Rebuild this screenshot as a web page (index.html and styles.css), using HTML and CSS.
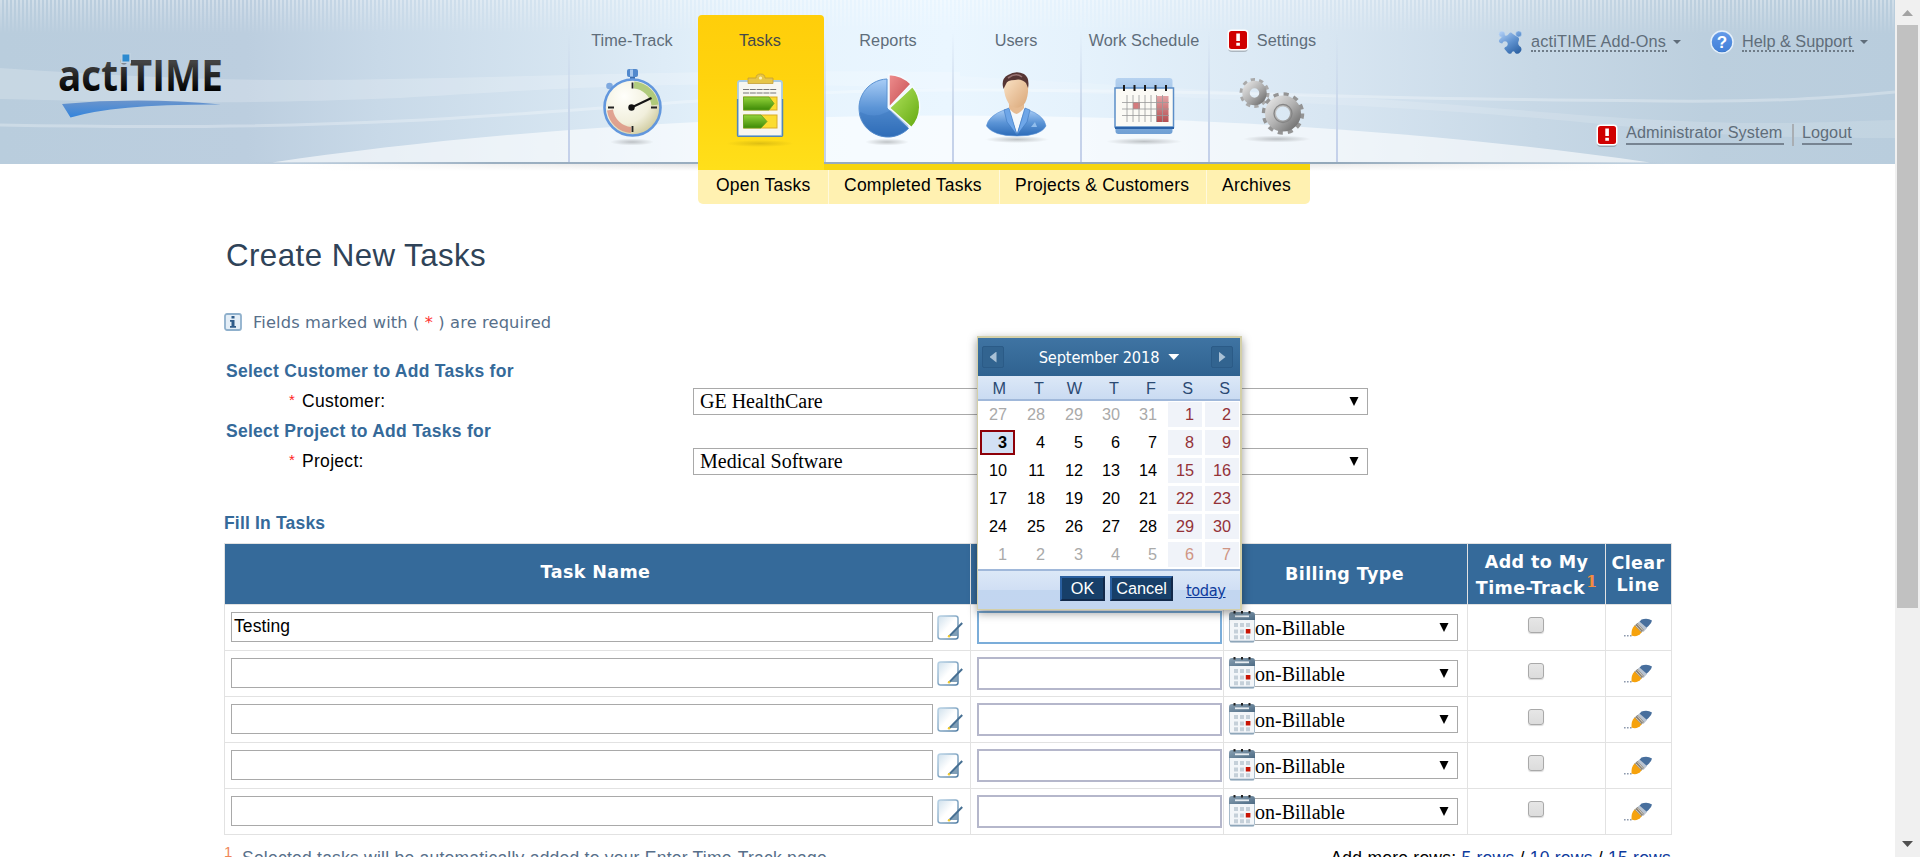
FILE: index.html
```html
<!DOCTYPE html>
<html lang="en">
<head>
<meta charset="utf-8">
<title>actiTIME - Create New Tasks</title>
<link rel="stylesheet" href="styles.css">
</head>
<body>
<svg class="defs" aria-hidden="true">
  <defs>
    <linearGradient id="blueV" x1="0" y1="0" x2="0" y2="1"><stop offset="0" stop-color="#a9cdf6"/><stop offset=".5" stop-color="#5b94d6"/><stop offset="1" stop-color="#2c6bb8"/></linearGradient>
    <linearGradient id="puzzle" gradientUnits="userSpaceOnUse" x1="4" y1="2" x2="18" y2="23"><stop offset="0" stop-color="#a9c9f2"/><stop offset=".5" stop-color="#5f92cf"/><stop offset="1" stop-color="#2d62a4"/></linearGradient>
    <linearGradient id="logoInk" x1="0" y1="0" x2="0" y2="1"><stop offset=".3" stop-color="#434343"/><stop offset=".8" stop-color="#000"/></linearGradient>
    <linearGradient id="swoosh" x1="0" y1="0" x2="0" y2="1"><stop offset="0" stop-color="#6a94cc"/><stop offset="1" stop-color="#3384dc"/></linearGradient>
    <linearGradient id="green" x1="0" y1="0" x2="0" y2="1"><stop offset="0" stop-color="#93d33a"/><stop offset="1" stop-color="#3d8a06"/></linearGradient>
    <linearGradient id="greenPie" x1="0" y1="0" x2="1" y2="1"><stop offset="0" stop-color="#b5e661"/><stop offset="1" stop-color="#63a80f"/></linearGradient>
    <linearGradient id="redPie" x1="0" y1="0" x2="1" y2="1"><stop offset="0" stop-color="#ee8e8e"/><stop offset="1" stop-color="#c44a4f"/></linearGradient>
    <linearGradient id="metal" x1="0" y1="0" x2="1" y2="1"><stop offset="0" stop-color="#dedede"/><stop offset=".5" stop-color="#b2b2b2"/><stop offset="1" stop-color="#777"/></linearGradient>
    <radialGradient id="dial" cx=".35" cy=".3" r=".8"><stop offset="0" stop-color="#fffffb"/><stop offset=".6" stop-color="#f1efdc"/><stop offset="1" stop-color="#c9c493"/></radialGradient>
    <radialGradient id="shade"><stop offset="0" stop-color="#000" stop-opacity=".22"/><stop offset="1" stop-color="#000" stop-opacity="0"/></radialGradient>
    <linearGradient id="paper" x1="0" y1="0" x2="1" y2="1"><stop offset="0" stop-color="#cfe0ec"/><stop offset=".5" stop-color="#fff"/><stop offset="1" stop-color="#fff"/></linearGradient>
    <linearGradient id="paperEdge" x1="0" y1="0" x2="1" y2="1"><stop offset="0" stop-color="#b9d3e6"/><stop offset="1" stop-color="#537fa5"/></linearGradient>
    <linearGradient id="calHead" x1="0" y1="0" x2="1" y2="1"><stop offset="0" stop-color="#8ba2b4"/><stop offset="1" stop-color="#4d6b84"/></linearGradient>
    <linearGradient id="face" x1="0" y1="0" x2="1" y2="1"><stop offset="0" stop-color="#fbe3c6"/><stop offset="1" stop-color="#d9a677"/></linearGradient>
    <linearGradient id="weekend" x1="0" y1="0" x2="0" y2="1"><stop offset="0" stop-color="#e2a3a5"/><stop offset="1" stop-color="#b44f52"/></linearGradient>
    <linearGradient id="calBack" x1="0" y1="0" x2="0" y2="1"><stop offset="0" stop-color="#b6d2f0"/><stop offset="1" stop-color="#6f9fd4"/></linearGradient>
  </defs>
  <symbol id="alert" viewBox="0 0 22 24">
    <rect x="1" y="2.5" width="20" height="20.5" rx="4" fill="#000" opacity=".22"/>
    <rect x="0.5" y="0.5" width="21" height="21" rx="4" fill="#fff"/>
    <rect x="2" y="2" width="18" height="18" rx="2.5" fill="#d00000"/>
    <path d="M9.3 4.5h3.6v7.6H9.3zM9.3 13.8h3.6v3H9.3z" fill="#fff"/>
  </symbol>
  <symbol id="note" viewBox="0 0 26 26">
    <rect x="1" y="1" width="20" height="23" rx="2.5" fill="url(#paper)" stroke="url(#paperEdge)" stroke-width="1.5"/>
    <path d="M13 21l7.500-7.500v7.500z" fill="#4c7699" opacity=".7"/>
    <path d="M25.2 8L14 19.4l-2.2 2.2" stroke="#466f92" stroke-width="2" fill="none"/>
    <circle cx="12" cy="21.3" r="1.2" fill="#f2cb2c"/>
  </symbol>
  <symbol id="cal" viewBox="0 0 26 32">
    <rect x=".5" y="4" width="25" height="27" rx="2" fill="#f3f6f9" stroke="#a9bccb"/>
    <path d="M1 30.5h24" stroke="#8ea6b9" stroke-width="1.6"/>
    <path d="M0 9V4q0-3 3-3h20q3 0 3 3v5z" fill="url(#calHead)"/>
    <path d="M6 5.3h14" stroke="#e6ecf1" stroke-width="1.8"/>
    <path d="M5.5 0v2.6M13 0v2.6M20.5 0v2.6" stroke="#222" stroke-width="2"/>
    <path d="M5 12h4v4H5zM11 12h4v4h-4zM17 12h4v4h-4zM5 18.500h4v4H5zM11 18.500h4v4h-4zM5 24.300h4v4H5zM11 24.300h4v4h-4zM17 24.300h4v4h-4z" fill="#c5d0d9"/>
    <path d="M16.800 18h4.600v4.500h-4.600z" fill="#c81404"/>
  </symbol>
  <symbol id="eraser" viewBox="0 0 30 20">
    <path d="M1 17.700h8" stroke="#8d99ad" stroke-width="1.600" stroke-dasharray="1.600 1.400"/>
    <path d="M18.500 1.500q6-2 10.500 1-.5 3-3.500 5.500l-4.500 4-7-5.500z" fill="#486f9d"/>
    <path d="M13.500 6l3-2.500 7.500 6.500-3.500 4z" fill="#b9c3d0"/>
    <path d="M11 8L14.500 5l6.500 7L18 15z" fill="#8b857b"/>
    <path d="M12.500 7.500l5.500 6M14.500 6l5.500 6.500" stroke="#e3ddd0" stroke-width=".8"/>
    <path d="M11.500 7.500q-3.500 3.500-3 10 5.500 2.500 10-3z" fill="#f6a20c"/>
  </symbol>
  <symbol id="down" viewBox="0 0 12 10"><path d="M1.500 0h9l-4.500 9z" fill="#000"/></symbol>
</svg>

<div class="page">
  <header class="header">
    <svg class="waves" width="1895" height="164" viewBox="0 0 1895 164">
      <path d="M0 68C120 76 200 80 300 80C500 79 700 68 960 72V90C700 79 600 86 400 98C200 106 100 101 0 99z" fill="#fff" opacity=".2"/>
      <path d="M0 125C160 128 300 126 400 121S600 108 697 101S850 90 960 90S1240 93 1340 96S1540 100 1660 101S1830 98 1895 92" fill="none" stroke="#fff" stroke-width="3" opacity=".28"/>
      <path d="M960 76C1100 84 1240 92 1340 97S1560 115 1660 120S1800 123 1895 120V138C1800 138 1720 136 1640 128S1480 112 1340 105S1100 93 960 90z" fill="#fff" opacity=".14"/>
      <path d="M272 162.500C450 136 700 115 950 115.500C1200 116 1440 132 1650 162.500z" fill="#fff" opacity=".6"/>
    </svg>
    <div class="brand">
      <svg width="200" height="80" viewBox="40 45 200 80">
        <text x="58" y="90.500" class="logo-text" textLength="165" lengthAdjust="spacingAndGlyphs" fill="url(#logoInk)">actiTIME</text>
        <rect x="120.500" y="53" width="10.500" height="10.500" fill="#c0d2e1"/>
        <rect x="122.500" y="54.500" width="6.800" height="7" fill="#2e8bd0"/>
        <path d="M62 104Q140 97 221 104.500Q115 104 70.500 117.500z" fill="url(#swoosh)"/>
      </svg>
    </div>
    <nav class="tabs">
      <a class="tab"><span class="tab-label">Time-Track</span>
        <svg width="70" height="80" viewBox="0 0 70 80">
          <ellipse cx="35" cy="77" rx="22" ry="3.500" fill="url(#shade)"/>
          <rect x="30" y="4" width="11" height="8" rx="2" fill="#5289cd"/><rect x="33" y="4.500" width="3" height="7" fill="#a9c9ee"/>
          <rect x="33" y="12" width="5" height="4" fill="#3c6cab"/><circle cx="12.500" cy="21" r="3.300" fill="#7fa9df"/>
          <circle cx="35.500" cy="42.500" r="28" fill="url(#dial)" stroke="#6297dd" stroke-width="2.600"/>
          <path d="M37 20a23 23 0 0 1 21 20" stroke="#a5c46c" stroke-width="7" fill="none" opacity=".85"/>
          <path d="M13 45a23 23 0 0 0 21 20" stroke="#db8f7d" stroke-width="6" fill="none" opacity=".8"/>
          <path d="M35.500 17.500v6M35.500 61v6M11 42.500h6M54 42.500h6" stroke="#222" stroke-width="1.800"/>
          <path d="M34.500 42.500L54.500 33" stroke="#151515" stroke-width="2"/><circle cx="34.500" cy="42.500" r="3.200" fill="#111"/>
        </svg></a>
      <a class="tab active"><span class="tab-label">Tasks</span>
        <svg width="70" height="80" viewBox="0 0 70 80">
          <ellipse cx="35" cy="78.500" rx="34" ry="3.500" fill="url(#shade)" opacity=".6"/>
          <rect x="13" y="16" width="44" height="55" rx="2" fill="#f8f7f0" stroke="#a9cbe4" stroke-width="1.800"/>
          <path d="M12.500 34v36.500q0 .8.800.8h43.500q.8 0 .8-.8V34" fill="none" stroke="#5586b5" stroke-width="1.300"/>
          <path d="M23 13h8q0-4 4.500-4t4.500 4h8v5.500H23z" fill="#e6c548" stroke="#c4a036" stroke-width=".8"/><circle cx="35.500" cy="13" r="1.600" fill="#fff4b8"/>
          <path d="M18 24.500h34M18 28h34" stroke="#777" stroke-width="1.200" stroke-dasharray="6 .8"/>
          <rect x="18.500" y="32" width="33.500" height="13" fill="#fbdc30" stroke="#d9ac26"/>
          <path d="M18.500 32H44l5 6.500-5 6.500H18.500z" fill="url(#green)" stroke="#62a022" stroke-width=".8"/>
          <rect x="18.500" y="50" width="33.500" height="13" fill="#fbdc30" stroke="#d9ac26"/>
          <path d="M18.500 50H36l6 6.500-6 6.500H18.500z" fill="url(#green)" stroke="#62a022" stroke-width=".8"/>
        </svg></a>
      <a class="tab"><span class="tab-label">Reports</span>
        <svg width="70" height="80" viewBox="0 0 70 80">
          <ellipse cx="34" cy="77" rx="22" ry="3.500" fill="url(#shade)"/>
          <path d="M34 14a29 29 0 1 0 21.500 49.500L34 43z" fill="url(#blueV)" stroke="#5b92d2"/>
          <path d="M7 47q14 7 27 0t20-7L55.500 63A29 29 0 0 1 6 50z" fill="#3570b8" opacity=".35"/>
          <path d="M36 42.500V9.500a32 32 0 0 1 22 9.500z" fill="url(#redPie)" stroke="#f6fbff" stroke-width="1.500"/>
          <path d="M36.500 43L59.500 21.500a31 31 0 0 1-1 41z" fill="url(#greenPie)" stroke="#f6fbff" stroke-width="1.500"/>
        </svg></a>
      <a class="tab"><span class="tab-label">Users</span>
        <svg width="70" height="80" viewBox="0 0 70 80">
          <ellipse cx="36" cy="74.500" rx="32" ry="3.500" fill="url(#shade)"/>
          <path d="M5.500 61Q7 51 24 44.500h22Q63 50 65 61 60 71 36 71T5.500 61z" fill="url(#blueV)" stroke="#5a92d6" stroke-width=".6"/>
          <path d="M27 41L36 69 44 41z" fill="#f3f8fc"/><path d="M28 43l8 27L26 57l-3-12zM44 43l-8 27 10-13 3-12z" fill="#6ea6e8" stroke="#3c77c0" stroke-width=".6"/>
          <path d="M50 62l4-5 2 5z" fill="#91bdec"/>
          <path d="M28 35h15v8q-4 5-7.500 6-4-1-7.500-6z" fill="#e6bb92"/>
          <path d="M23 18q13-10 24 0 1 12-3 20-8 9-16 1-6-9-5-21z" fill="url(#face)"/>
          <path d="M22.500 24q-3-10 4.500-14 8-5 16-1 6 4 4 14l-2-5q-5-5-11-3-8 0-9 4z" fill="#563534"/><path d="M27 13q8-6 14-1" stroke="#987272" stroke-width="1.600" fill="none"/>
        </svg></a>
      <a class="tab"><span class="tab-label">Work Schedule</span>
        <svg width="70" height="80" viewBox="0 0 70 80">
          <ellipse cx="35" cy="76.500" rx="38" ry="3.500" fill="url(#shade)"/>
          <rect x="6.500" y="13" width="57" height="56" rx="3" fill="url(#calBack)"/>
          <path d="M6 23h58.500v39H6z" fill="#fbfaf5" stroke="#5c8ec8" stroke-width="1.500"/><path d="M6 63h59" stroke="#2b62a8" stroke-width="2"/>
          <rect x="47.500" y="31" width="12" height="26" fill="url(#weekend)"/><rect x="24" y="37" width="7" height="7" fill="#d57b7d"/>
          <path d="M13 37.500h47M13 44h47M13 50.500h47M18 30v27M24 30v27M30 30v27M36 30v27M42 30v27M47.500 30v27M53.500 30v27" stroke="#9a9a9a" stroke-width=".8"/>
          <path d="M15 20v6M25.500 20v6M36 20v6M46.500 20v6M57 20v6" stroke="#1b1b1b" stroke-width="2"/>
        </svg></a>
      <a class="tab tab-settings"><span class="tab-label"><svg width="22" height="24"><use href="#alert"/></svg>Settings</span>
        <svg width="70" height="80" viewBox="0 0 70 80">
          <ellipse cx="40" cy="74" rx="34" ry="3.500" fill="url(#shade)"/>
          <circle cx="17.500" cy="28" r="13" fill="none" stroke="#a9a9a9" stroke-width="4" stroke-dasharray="4.170 4"/>
          <circle cx="17.500" cy="28" r="8.500" fill="none" stroke="url(#metal)" stroke-width="7.500"/>
          <circle cx="46" cy="48.500" r="19" fill="none" stroke="#949494" stroke-width="4.500" stroke-dasharray="5 4.950"/>
          <circle cx="46" cy="48.500" r="12.500" fill="none" stroke="url(#metal)" stroke-width="11"/>
          <circle cx="46" cy="48.500" r="9" fill="none" stroke="#858585" stroke-width="1.300"/>
        </svg></a>
    </nav>
    <div class="account">
      <div class="account-row help-row">
        <svg width="25" height="25" viewBox="0 0 24 24">
          <g fill="url(#puzzle)" stroke="#c3daf2" stroke-width=".5">
            <circle cx="3.800" cy="4" r="2.900"/><circle cx="19.800" cy="3.800" r="2.900"/>
          </g>
          <path d="M4 6.500L6 4.500Q8 7 10.500 3.500 12 1.500 14 3.500L17.500 6Q21 7 20 10q-2 4 2 6.500 1.500 3-1 5-2 2.500-4.500.5-1-2.500-3-1-1 3-4 1L6 18q0-2 2.500-2.500 2-2.500-.5-4.500-3-1-4 2Q0 12 1 9.500z" fill="url(#puzzle)"/>
        </svg>
        <a class="dotted addons">actiTIME Add-Ons</a><i class="caret"></i>
        <svg class="help-icon" width="24" height="24" viewBox="0 0 24 24"><circle cx="12" cy="12" r="11" fill="url(#blueV)" stroke="#e4effb" stroke-width="1.500"/><circle cx="12" cy="12" r="10" fill="#4b88e4" opacity=".7"/><text x="12" y="18" text-anchor="middle" class="q">?</text></svg>
        <a class="dotted support">Help &amp; Support</a><i class="caret"></i>
      </div>
      <div class="account-row user-row">
        <svg width="22" height="24"><use href="#alert"/></svg>
        <a class="solid admin">Administrator System</a><i class="bar"></i><a class="solid">Logout</a>
      </div>
    </div>
  </header>
  <div class="submenu-line">
    <div class="submenu">
      <a class="s1">Open Tasks</a><a class="s2">Completed Tasks</a><a class="s3">Projects &amp; Customers</a><a class="s4">Archives</a>
    </div>
  </div>

  <main class="content">
    <h1>Create New Tasks</h1>
    <p class="hint">
      <svg width="18" height="18" viewBox="0 0 18 18"><rect x="1" y="1" width="16" height="16" rx="2" fill="#e4eef7" stroke="#8fb0cc" stroke-width="1.800"/><path d="M7.500 3h3v2.500h-3zM6 7h4.500v6H12v1.700H6V13h1.500V8.700H6z" fill="#2f5c8a"/></svg>
      <span>Fields marked with ( <b class="req">*</b> ) are required</span>
    </p>
    <h2>Select Customer to Add Tasks for</h2>
    <div class="field"><span class="star">*</span><label>Customer:</label><div class="select">GE HealthCare<svg width="12" height="10"><use href="#down"/></svg></div></div>
    <h2>Select Project to Add Tasks for</h2>
    <div class="field"><span class="star">*</span><label>Project:</label><div class="select">Medical Software<svg width="12" height="10"><use href="#down"/></svg></div></div>
    <h2 class="fill">Fill In Tasks</h2>

    <div class="grid">
      <div class="th name">Task Name</div><div class="th"></div><div class="th billing-h">Billing Type</div><div class="th track">Add to My<br>Time-Track<sup>1</sup></div><div class="th clear">Clear<br>Line</div>

      <div class="td c1"><div class="input">Testing</div><svg width="26" height="26"><use href="#note"/></svg></div><div class="td c2"><div class="date focus"></div></div><div class="td c3"><svg width="26" height="32"><use href="#cal"/></svg><div class="billing">on-Billable<svg width="12" height="10"><use href="#down"/></svg></div></div><div class="td c4"><i class="check"></i></div><div class="td c5"><svg width="30" height="20"><use href="#eraser"/></svg></div>

      <div class="td c1"><div class="input"></div><svg width="26" height="26"><use href="#note"/></svg></div><div class="td c2"><div class="date"></div></div><div class="td c3"><svg width="26" height="32"><use href="#cal"/></svg><div class="billing">on-Billable<svg width="12" height="10"><use href="#down"/></svg></div></div><div class="td c4"><i class="check"></i></div><div class="td c5"><svg width="30" height="20"><use href="#eraser"/></svg></div>

      <div class="td c1"><div class="input"></div><svg width="26" height="26"><use href="#note"/></svg></div><div class="td c2"><div class="date"></div></div><div class="td c3"><svg width="26" height="32"><use href="#cal"/></svg><div class="billing">on-Billable<svg width="12" height="10"><use href="#down"/></svg></div></div><div class="td c4"><i class="check"></i></div><div class="td c5"><svg width="30" height="20"><use href="#eraser"/></svg></div>

      <div class="td c1"><div class="input"></div><svg width="26" height="26"><use href="#note"/></svg></div><div class="td c2"><div class="date"></div></div><div class="td c3"><svg width="26" height="32"><use href="#cal"/></svg><div class="billing">on-Billable<svg width="12" height="10"><use href="#down"/></svg></div></div><div class="td c4"><i class="check"></i></div><div class="td c5"><svg width="30" height="20"><use href="#eraser"/></svg></div>

      <div class="td c1"><div class="input"></div><svg width="26" height="26"><use href="#note"/></svg></div><div class="td c2"><div class="date"></div></div><div class="td c3"><svg width="26" height="32"><use href="#cal"/></svg><div class="billing">on-Billable<svg width="12" height="10"><use href="#down"/></svg></div></div><div class="td c4"><i class="check"></i></div><div class="td c5"><svg width="30" height="20"><use href="#eraser"/></svg></div>
    </div>
    <div class="notes">
      <div class="note-left"><span class="mark">1</span><span class="note-text">Selected tasks will be automatically added to your Enter Time-Track page.</span></div>
      <div class="more">Add more rows: <a>5 rows</a> / <a>10 rows</a> / <a>15 rows</a></div>
    </div>
  </main>
</div>

<div class="scrollbar"><i class="up"></i><i class="thumb"></i><i class="dn"></i></div>

<div class="popup">
  <div class="p-title"><i class="p-btn prev"></i><span class="month">September 2018<i class="p-caret"></i></span><i class="p-btn next"></i></div>
  <div class="p-grid p-week"><span>M</span><span>T</span><span>W</span><span>T</span><span>F</span><span>S</span><span>S</span></div>
  <div class="p-grid p-days">
    <span class="o">27</span><span class="o">28</span><span class="o">29</span><span class="o">30</span><span class="o">31</span><span class="w">1</span><span class="w">2</span>
    <span class="sel">3</span><span>4</span><span>5</span><span>6</span><span>7</span><span class="w">8</span><span class="w">9</span>
    <span>10</span><span>11</span><span>12</span><span>13</span><span>14</span><span class="w">15</span><span class="w">16</span>
    <span>17</span><span>18</span><span>19</span><span>20</span><span>21</span><span class="w">22</span><span class="w">23</span>
    <span>24</span><span>25</span><span>26</span><span>27</span><span>28</span><span class="w">29</span><span class="w">30</span>
    <span class="o">1</span><span class="o">2</span><span class="o">3</span><span class="o">4</span><span class="o">5</span><span class="w x">6</span><span class="w x">7</span>
  </div>
  <div class="p-foot"><span class="btn ok">OK</span><span class="btn cancel">Cancel</span><a class="today">today</a></div>
</div>
</body>
</html>
```
FILE: styles.css
```css
* { box-sizing: border-box; }
html, body { margin: 0; height: 857px; overflow: hidden; }
body { display: flex; background: #fff; font-family: "Liberation Sans", Arial, sans-serif; font-size: 17.5px; color: #000; position: relative; }
.defs { position: absolute; width: 0; height: 0; }
.page { width: 1895px; height: 857px; overflow: hidden; }
a { white-space: nowrap; }
i { font-style: normal; display: block; flex: none; }
svg { display: block; flex: none; }

/* header */
.header { position: relative; display: flex; height: 164px; background: linear-gradient(90deg, #b9cddd 0, #bccedf 13%, #c8d9e8 20%, #d6e5f1 30%, #e6f3fd 40%, #eaf6ff 50%, #e5f2fc 57%, #d8e6f2 70%, #c7d8e6 81%, #bccfde 90%, #b9cddd 100%); }
.header::before { content: ""; position: absolute; inset: 0 0 auto 0; height: 34px; background: repeating-linear-gradient(90deg, rgba(255,255,255,.34) 0 2px, transparent 2px 4px); -webkit-mask-image: linear-gradient(#000, transparent); mask-image: linear-gradient(#000, transparent); }
.header::after { content: ""; position: absolute; left: 0; right: 0; bottom: 0; height: 2px; background: linear-gradient(90deg, rgba(140,165,185,0) 13%, #9bafc1 26%, #93a8ba 70%, rgba(140,165,185,0) 88%); }
.waves { position: absolute; left: 0; top: 0; }
.brand { position: relative; width: 568px; padding: 45px 0 0 40px; }
.logo-text { font: bold 43.500px "Open Sans", "Noto Sans", sans-serif; }
.tabs { position: relative; z-index: 2; display: flex; width: 770px; height: 164px; }
.tab { position: relative; width: 128px; height: 162px; padding: 30px 2px 0 0; display: flex; flex-direction: column; align-items: center; color: #5f6d7a; font-size: 16.250px; letter-spacing: .06px; border-left: 2px solid; border-image: linear-gradient(transparent 20%, #c7d5ea 70%, #c4d0ea) 1; }
.tab:last-child { width: 130px; border-right: 2px solid; }
.tab-label { display: flex; align-items: center; justify-content: center; height: 20px; line-height: 20px; white-space: nowrap; }
.tab > svg { margin-top: 15px; overflow: visible; }
.tab.active { width: 126px; margin: 15px 0 0 2px; height: 155px; padding-top: 15px; border: 0; border-radius: 4px 4px 0 0; background: linear-gradient(#ffce0a, #ffd30d 40%, #ffdf1a); color: #44484c; }
.tab-settings .tab-label svg { margin: 2px 8px 0 0; }
.tab-settings .tab-label { padding: 0 1px 0 0; letter-spacing: .1px; }
.account { position: relative; flex: 1; padding-top: 30px; }
.account-row { display: flex; color: #5f6d7a; font-size: 16.250px; line-height: 22px; }
.help-row { height: 94px; padding-left: 160px; }
.dotted { border-bottom: 2px dotted #6f7c88; height: 22px; }
.addons { width: 136px; margin-left: 8px; letter-spacing: .2px; }
.support { width: 112px; margin-left: 8px; }
.help-icon { margin: 0 0 0 29px; }
.q { font: bold 17px "Liberation Sans", Arial, sans-serif; fill: #fff; }
.caret { width: 8px; height: 4px; margin: 10px 0 0 6px; background: #5f6d7a; clip-path: polygon(0 0, 100% 0, 50% 100%); }
.user-row { padding-left: 258px; height: 24px; line-height: 17px; }
.solid { height: 21px; border-bottom: 2px solid #778492; }
.admin { margin-left: 8px; width: 158px; letter-spacing: .1px; }
.bar { width: 2px; height: 22px; margin: 0 8px; background: #a9aeb3; }

.submenu-line { height: 40px; padding-left: 698px; background: linear-gradient(90deg, #fff, transparent 35% 65%, #fff) 300px 0 / 1320px 7px no-repeat, linear-gradient(rgba(0,0,0,.13), transparent) 300px 0 / 1320px 7px no-repeat; }
.submenu { display: flex; width: 612px; height: 40px; border-top: 6px solid #f6d50e; border-radius: 0 0 5px 5px; background: #fff1b1; overflow: hidden; }
.submenu a { line-height: 30px; height: 34px; border-left: 1px solid #fff9dd; padding-left: 15px; letter-spacing: .25px; }
.submenu .s1 { width: 130px; border-left: 0; padding-left: 18px; }
.submenu .s2 { width: 171px; }
.submenu .s3 { width: 207px; }
.submenu .s4 { width: 104px; }

/* form */
.content { width: 1447px; margin: 32px 0 0 224px; }
h1 { margin: 0; padding-left: 2px; height: 40px; line-height: 40px; font-size: 31.250px; font-weight: 400; letter-spacing: .45px; color: #2f4358; }
.hint { display: flex; align-items: center; gap: 11px; margin: 31px 0 19px; height: 30px; font-family: "DejaVu Sans", Verdana, sans-serif; font-size: 16.250px; letter-spacing: .13px; color: #576f8a; white-space: pre; }
.req { color: #f33; font-weight: 400; }
h2 { margin: 0; padding-left: 2px; height: 30px; line-height: 30px; font-size: 17.500px; font-weight: 700; letter-spacing: .27px; color: #356a9a; }
.field { display: flex; height: 30px; align-items: center; }
.star { width: 23px; margin-left: 65px; padding-top: 1px; font-size: 15px; color: #f22; height: 22px; }
.field label { width: 381px; margin-left: -10px; letter-spacing: .3px; }
.select { display: flex; align-items: center; justify-content: space-between; width: 675px; height: 27px; border: 1px solid #a9a9a9; padding: 1px 7px 0 6px; font: 20px "Liberation Serif", "Times New Roman", serif; margin-left: auto; margin-right: 303px; }
h2.fill { margin: 32px 0 5px; padding-left: 0; letter-spacing: .18px; }

/* task table */
.grid { display: grid; grid-template-columns: 746px 253px 244px 138px 66px; grid-template-rows: 62px repeat(5, 46px); width: 1448px; border-left: 1px solid #e2e2e2; }
.th { background: #356a9a; color: #fff; border: solid #e2e2e2; border-width: 1px 1px 1px 0; font: bold 17.500px/22px "DejaVu Sans", Verdana, sans-serif; letter-spacing: .4px; display: flex; align-items: center; justify-content: center; text-align: center; }
.name { padding: 0 4px 4px 0; }
.billing-h { padding-right: 2px; }
.track { display: block; padding-top: 5px; line-height: 26px; white-space: nowrap; }
.track sup { font: bold 16px/10px "DejaVu Serif", serif; color: #f68b3f; vertical-align: 7px; letter-spacing: 0; margin-left: 1px; }
.clear { padding-right: 1px; }
.td { display: flex; border: solid #e2e2e2; border-width: 0 1px 1px 0; }
.input { width: 703px; height: 30px; margin: 7px 4px 0 6px; border: 1px solid #a9a9a9; padding-left: 2px; line-height: 26px; letter-spacing: .1px; }
.c1 .input { width: 702px; }
.c1 svg { margin-top: 10px; }
.date { width: 245px; height: 33px; margin: 6px 0 0 6px; border: 2px solid #b5b7cb; }
.date.focus { border-color: #7badd9; }
.c3 svg { margin: 6px 0 0 5px; }
.billing { display: flex; justify-content: space-between; align-items: center; width: 203px; height: 27px; margin-top: 9px; border: 1px solid #a9a9a9; border-left: 0; padding: 1px 7px 0 0; font: 20px "Liberation Serif", "Times New Roman", serif; }
.c3 .billing svg { margin: 0; }
.c4 { justify-content: center; }
.check { width: 16px; height: 16px; margin: 12px 2px 0 0; border: 1px solid #a9a9a9; border-radius: 3px; background: linear-gradient(#e6e6e6, #dcdcdc); box-shadow: 0 1px 1px rgba(0,0,0,.15); }
.c5 svg { margin: 13px 0 0 17px; }
.notes { display: flex; justify-content: space-between; height: 40px; }
.note-left { display: flex; color: #576f8a; }
.mark { width: 18px; padding-top: 7px; font-size: 15px; line-height: 20px; color: #f0875a; }
.note-text { padding-top: 12px; line-height: 22px; letter-spacing: .23px; white-space: nowrap; }
.more { padding-top: 12px; line-height: 22px; letter-spacing: .24px; }
.more a { color: #0d3a9c; }

/* browser scrollbar */
.scrollbar { width: 25px; height: 857px; background: #f0f0f0; display: flex; flex-direction: column; align-items: center; }
.up { width: 11px; height: 6px; margin: 10px 0 9px; background: #a3a3a3; clip-path: polygon(50% 0, 100% 100%, 0 100%); }
.thumb { width: 21px; height: 583px; background: #c1c1c1; }
.dn { width: 11px; height: 6px; margin-top: 233px; background: #505050; clip-path: polygon(0 0, 100% 0, 50% 100%); }

/* date picker */
.popup { position: absolute; left: 977px; top: 336px; width: 265px; height: 274px; background: #fff; border: solid #d3cfa8; border-width: 2px 2px 1px 1px; box-shadow: 0 3px 9px rgba(0,0,0,.4); }
.p-title { height: 38px; display: flex; justify-content: space-between; align-items: center; padding: 0 7px 0 4px; background: linear-gradient(#3f74a3, #2f6290); color: #fff; font: 16.250px "DejaVu Sans Condensed", "DejaVu Sans", sans-serif; font-stretch: condensed; }
.p-btn { width: 22px; height: 22px; border-radius: 2px; background: #326490; border: 1px solid #2b5b87; display: flex; align-items: center; justify-content: center; }
.p-btn::before { content: ""; width: 7px; height: 11px; background: #a9c1d6; clip-path: polygon(100% 0, 100% 100%, 0 50%); }
.next::before { clip-path: polygon(0 0, 100% 50%, 0 100%); }
.month { display: flex; align-items: center; padding-left: 3px; letter-spacing: -.15px; }
.p-caret { width: 11px; height: 6px; margin-left: 9px; background: #fff; clip-path: polygon(0 0, 100% 0, 50% 100%); }
.p-grid { display: grid; grid-template-columns: 35px 35px 35px 34px 34px 34px 34px; column-gap: 3px; padding-left: 2px; text-align: right; font-size: 16.250px; }
.p-week { height: 25px; line-height: 25px; background: linear-gradient(#dce8f7, #cadbf2); border-bottom: 2px solid #a0b8da; color: #2b4a73; }
.p-week span { padding-right: 9px; }
.p-days { grid-auto-rows: 25px; row-gap: 3px; padding-top: 1px; height: 168px; line-height: 25px; }
.p-days span { padding-right: 8px; }
.p-days .o { color: #aaa; }
.p-days .w { background: #f0f3f9; color: #943238; }
.p-days .x { color: #cf9584; }
.p-days .sel { border: 2px solid #8d0008; background: #d2e0f4; font-weight: 700; line-height: 21px; padding-right: 6px; }
.p-foot { display: flex; height: 40px; border-top: 2px solid #a0b8da; background: linear-gradient(#dce8f7 0, #d0dff4 50%, #c2d6f0 51%, #c2d5f0); padding: 5px 0 0 82px; font-size: 16.250px; }
.btn { height: 25px; line-height: 21px; text-align: center; color: #fff; background: #173f69; border: 2px solid; border-color: #2a5fa0 #12294a #12294a #2a5fa0; }
.ok { width: 45px; }
.cancel { width: 63px; margin-left: 5px; }
.today { margin: 5px 0 0 13px; color: #0d3a9c; text-decoration: underline; font: 16.250px/20px "DejaVu Sans Condensed", "DejaVu Sans", sans-serif; font-stretch: condensed; letter-spacing: -.4px; }
```
